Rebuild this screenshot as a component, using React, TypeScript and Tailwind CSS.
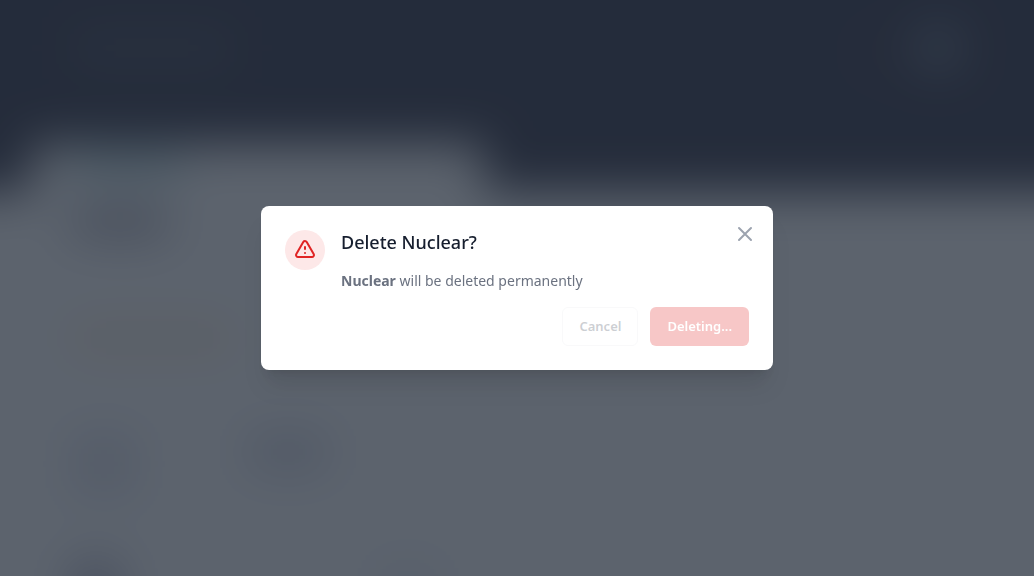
import React from "react";

function BackgroundPage() {
  return (
    <div aria-hidden="true" className="h-screen overflow-hidden bg-white">
      <div className="-m-16 flex flex-col bg-white blur-xl">
        <div className="flex h-52 shrink-0 items-start justify-between bg-[#333446] px-34 pt-24">
          <div className="h-8 w-40 rounded bg-[#434a58]" />
          <div className="flex items-center gap-6">
            <div className="size-4 rounded-full bg-[#6a4a50]" />
            <div className="-mt-2 size-12 rounded-full bg-[#6a7484]" />
          </div>
        </div>
        <div className="flex h-12 shrink-0 bg-[#333446] pl-24">
          <div className="w-full max-w-[452px] bg-white px-10 pt-2">
            <div className="h-6 w-28 rounded bg-[#b4d8dc]" />
          </div>
        </div>
        <div className="flex flex-col px-34 pt-4">
          <div className="h-7 w-24 rounded bg-[#a8a8b4]" />
          <div className="mt-22 h-7 w-40 rounded bg-[#f8ead8]" />
          <div className="mt-20 flex gap-28">
            <div className="h-16 w-16 rounded bg-[#e2e4ee]" />
            <div className="h-10 w-20 rounded bg-[#d6d8e4]" />
          </div>
          <div className="mt-16 flex gap-64">
            <div className="h-32 w-12 rounded bg-[#b8b8c8]" />
            <div className="h-32 w-16 rounded bg-[#eeeff6]" />
          </div>
        </div>
      </div>
    </div>
  );
}

function WarningIcon() {
  return (
    <svg className="size-6" fill="none" viewBox="0 0 24 24" stroke="currentColor" strokeWidth={2} aria-hidden="true">
      <path
        strokeLinecap="round"
        strokeLinejoin="round"
        d="M12 9v2m0 4h.01m-6.938 4h13.856c1.54 0 2.502-1.667 1.732-3L13.732 4c-.77-1.333-2.694-1.333-3.464 0L3.34 16c-.77 1.333.192 3 1.732 3z"
      />
    </svg>
  );
}

function CloseIcon() {
  return (
    <svg className="size-6" fill="none" viewBox="0 0 24 24" stroke="currentColor" strokeWidth={2} aria-hidden="true">
      <path strokeLinecap="round" strokeLinejoin="round" d="M6 18L18 6M6 6l12 12" />
    </svg>
  );
}

export default function App() {
  return (
    <div className="font-['Segoe_UI','Noto_Sans',sans-serif]">
      <BackgroundPage />
      <div className="fixed inset-0 flex items-center justify-center bg-[#1f2937]/73 p-4">
        <div
          role="dialog"
          aria-modal="true"
          aria-labelledby="dialog-title"
          className="relative w-full max-w-lg rounded-lg bg-white p-6 shadow-xl"
        >
          <button type="button" aria-label="Close" className="absolute top-4 right-4 text-[#9ca3af]">
            <CloseIcon />
          </button>
          <div className="flex items-start gap-4">
            <div className="flex size-10 shrink-0 items-center justify-center rounded-full bg-[#fde8e8] text-[#e02424]">
              <WarningIcon />
            </div>
            <div>
              <h3 id="dialog-title" className="text-lg leading-6 font-medium text-[#161e2e]">
                Delete Nuclear?
              </h3>
              <p className="mt-4 text-sm leading-[21px] text-[#6b7280]">
                <strong className="font-bold">Nuclear</strong> will be deleted permanently
              </p>
            </div>
          </div>
          <div className="mt-4 flex justify-end gap-3">
            <button
              type="button"
              disabled
              className="rounded-md border border-[#e5e7eb] bg-white px-4 py-2 text-[13px] leading-[21px] font-semibold text-[#374151] opacity-25"
            >
              Cancel
            </button>
            <button
              type="button"
              disabled
              className="rounded-md border border-transparent bg-[#e02424] px-4 py-2 text-[13px] leading-[21px] font-semibold text-white opacity-25"
            >
              Deleting...
            </button>
          </div>
        </div>
      </div>
    </div>
  );
}
